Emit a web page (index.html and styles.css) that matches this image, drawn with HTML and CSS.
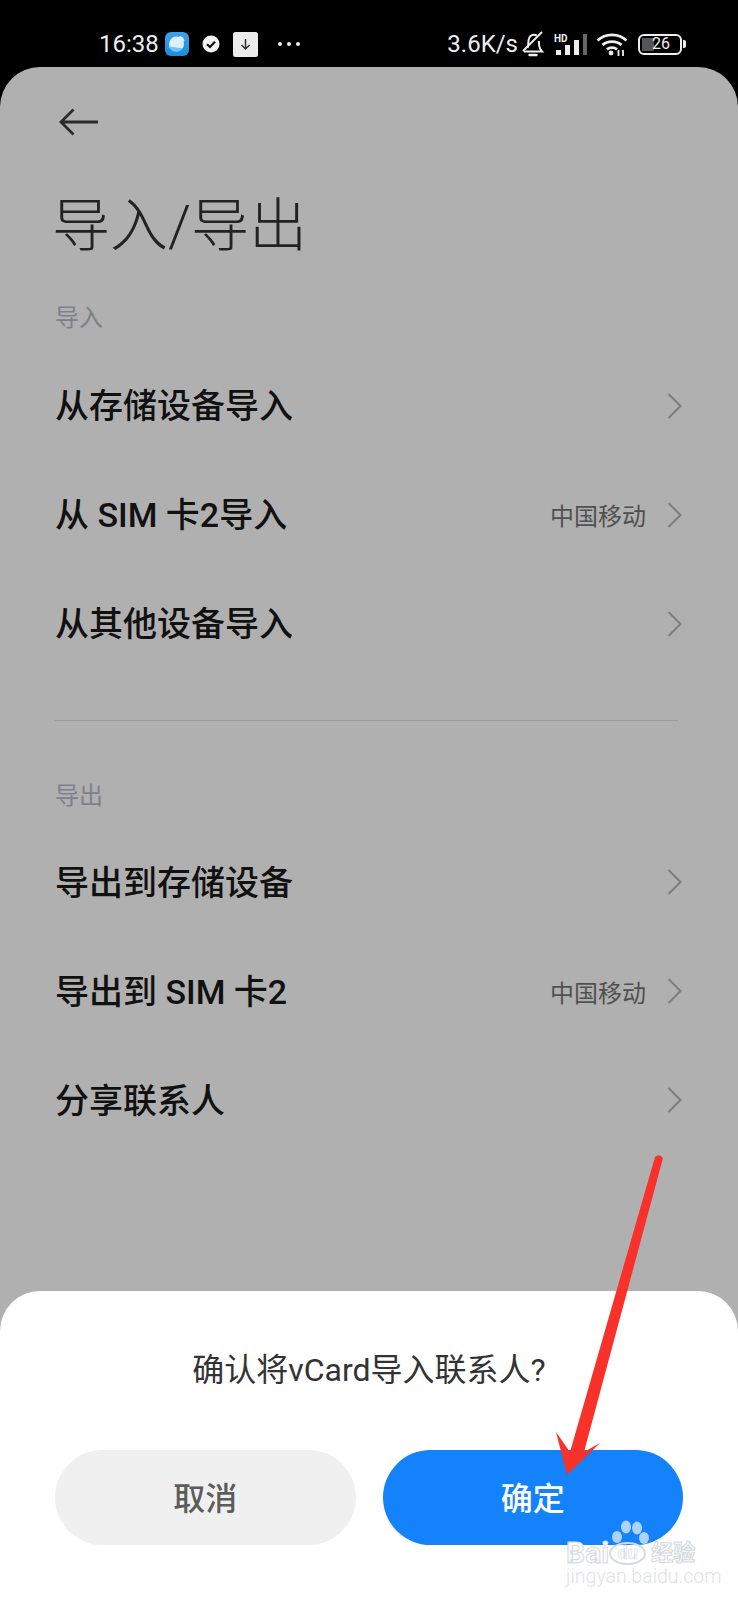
FILE: index.html
```html
<!DOCTYPE html>
<html lang="zh-CN">
<head>
    <meta charset="UTF-8">
    <meta name="viewport" content="width=device-width, initial-scale=1.0">
    <title>导入/导出</title>
    <link rel="stylesheet" href="styles.css">
</head>
<body>
    <div class="screen">
        <div class="status-bar">
            <div class="status-left">
                <span class="clock">16:38</span>
                <svg class="app-icon" width="24" height="24" viewBox="0 0 24 24">
                    <defs>
                        <linearGradient id="app-blue" x1="0" y1="0" x2="0" y2="1">
                            <stop offset="0" stop-color="#3f9fe8"></stop>
                            <stop offset="1" stop-color="#1a8fe0"></stop>
                        </linearGradient>
                    </defs>
                    <rect width="24" height="24" rx="6" fill="url(#app-blue)"></rect>
                    <path d="M4 15L15 4l3 1.500 1.500 3L9 19.500z" fill="#e6f2fb"></path>
                    <circle cx="11.500" cy="12" r="7.500" fill="#dceffb"></circle>
                    <path d="M4.500 14.500a7.500 7.500 0 0 0 13 2z" fill="#6fc4f2"></path>
                </svg>
                <svg class="check-icon" width="18" height="18" viewBox="0 0 18 18">
                    <circle cx="9" cy="9" r="8.500" fill="#f2f2f2"></circle>
                    <path d="M5 9.200l3 2.800 5-5.200" fill="none" stroke="#111" stroke-width="2.200"></path>
                </svg>
                <svg class="down-icon" width="25" height="25" viewBox="0 0 25 25">
                    <rect width="25" height="25" rx="2.500" fill="#ececec"></rect>
                    <path d="M12.500 7v10M8.500 13l4 4 4-4" fill="none" stroke="#333" stroke-width="1.500"></path>
                </svg>
                <svg class="more-icon" width="24" height="6" viewBox="0 0 24 6">
                    <circle cx="3" cy="3" r="2" fill="#eee"></circle>
                    <circle cx="12" cy="3" r="2" fill="#eee"></circle>
                    <circle cx="21" cy="3" r="2" fill="#eee"></circle>
                </svg>
            </div>
            <div class="status-right">
                <span class="speed">3.6K/s</span>
                <svg class="bell-icon" width="24" height="26" viewBox="0 0 24 26">
                    <path d="M3 20.500h18c-2-2-2.600-3.400-2.800-6l-.4-4.500M6.500 17c.4-1 .6-2.200.7-3.500l.3-4C8 6 10 3.800 13 3.800c1 0 2 .3 2.800.8" fill="none" stroke="#eee" stroke-width="2"></path>
                    <path d="M2 20L21 1" stroke="#eee" stroke-width="2"></path>
                    <path d="M8.500 24h7" stroke="#eee" stroke-width="2.400" stroke-linecap="round"></path>
                </svg>
                <div class="signal">
                    <span class="hd">HD</span>
                    <svg width="33" height="21" viewBox="0 0 33 21">
                        <rect x="2" y="16" width="5" height="5" fill="#eee"></rect>
                        <rect x="11" y="11" width="5" height="10" fill="#eee"></rect>
                        <rect x="20" y="6" width="5" height="15" fill="#eee"></rect>
                        <rect x="29" y="0" width="4" height="21" fill="#666"></rect>
                    </svg>
                </div>
                <svg class="wifi-icon" width="32" height="24" viewBox="0 0 32 24">
                    <path d="M1.500 8.500C9.500 1 22.500 1 30.500 8.500M6.500 13c5-4.500 14-4.500 19 0M11 17.300c2.800-2.300 7.200-2.300 10 0" fill="none" stroke="#eee" stroke-width="2.800"></path>
                    <circle cx="15" cy="21" r="2.400" fill="#eee"></circle>
                    <path d="M22.500 18v6M27 18v6" stroke="#eee" stroke-width="1.800"></path>
                </svg>
                <div class="battery">
                    <div class="battery-body">
                        <span class="battery-fill"></span>
                        <span class="battery-text">26</span>
                    </div>
                    <span class="battery-cap"></span>
                </div>
            </div>
        </div>

        <div class="sheet">
            <div class="nav">
                <svg width="40" height="28" viewBox="0 0 40 28">
                    <path d="M39 14H2M14.500 1.500L2 14l12.500 12.500" fill="none" stroke="#2b2b2b" stroke-width="2.800"></path>
                </svg>
            </div>
            <h1 class="title">导入/导出</h1>

            <div class="section-label first">导入</div>
            <div class="row">
                <span class="row-name">从存储设备导入</span>
                <svg class="chevron" width="15" height="26" viewBox="0 0 15 26"><polyline points="1.500 1 13.500 13 1.500 25"></polyline></svg>
            </div>
            <div class="row">
                <span class="row-name">从 SIM 卡2导入</span>
                <span class="row-value">中国移动</span>
                <svg class="chevron" width="15" height="26" viewBox="0 0 15 26"><polyline points="1.500 1 13.500 13 1.500 25"></polyline></svg>
            </div>
            <div class="row">
                <span class="row-name">从其他设备导入</span>
                <svg class="chevron" width="15" height="26" viewBox="0 0 15 26"><polyline points="1.500 1 13.500 13 1.500 25"></polyline></svg>
            </div>

            <div class="divider"></div>

            <div class="section-label">导出</div>
            <div class="row">
                <span class="row-name">导出到存储设备</span>
                <svg class="chevron" width="15" height="26" viewBox="0 0 15 26"><polyline points="1.500 1 13.500 13 1.500 25"></polyline></svg>
            </div>
            <div class="row">
                <span class="row-name">导出到 SIM 卡2</span>
                <span class="row-value">中国移动</span>
                <svg class="chevron" width="15" height="26" viewBox="0 0 15 26"><polyline points="1.500 1 13.500 13 1.500 25"></polyline></svg>
            </div>
            <div class="row">
                <span class="row-name">分享联系人</span>
                <svg class="chevron" width="15" height="26" viewBox="0 0 15 26"><polyline points="1.500 1 13.500 13 1.500 25"></polyline></svg>
            </div>
        </div>

        <div class="dialog">
            <p class="dialog-text">确认将vCard导入联系人?</p>
            <div class="dialog-buttons">
                <button class="btn btn-cancel">取消</button>
                <button class="btn btn-ok">确定</button>
            </div>
        </div>

        <!-- red annotation arrow drawn over the screenshot -->
        <svg class="arrow" width="738" height="1600" viewBox="0 0 738 1600">
            <path d="M655 1157Q659 1153 663 1158L584 1452 600 1443 567 1475 556 1432 570 1452z" fill="#f8312b"></path>
        </svg>

        <div class="watermark">
            <svg class="paw" width="42" height="30" viewBox="0 0 42 30">
                <ellipse cx="6" cy="17" rx="5" ry="6" fill="#fff"></ellipse>
                <ellipse cx="15" cy="7" rx="5" ry="6.500" fill="#fff"></ellipse>
                <ellipse cx="26" cy="8" rx="5" ry="6.500" fill="#fff"></ellipse>
                <ellipse cx="33" cy="18" rx="5" ry="6" fill="#fff"></ellipse>
            </svg>
            <div class="wm-brand"><span>Bai</span><span class="wm-du">du</span><span class="wm-cn">经验</span></div>
            <div class="wm-url">jingyan.baidu.com</div>
        </div>
    </div>
</body>
</html>
```

FILE: styles.css
```css
* {
    box-sizing: border-box;
}

body {
    margin: 0;
    background-color: #000;
    font-family: Roboto, "Noto Sans CJK SC", sans-serif;
}

.screen {
    position: relative;
    width: 738px;
    height: 1600px;
    overflow: hidden;
    display: flex;
    flex-direction: column;
}

/* Status bar */
.status-bar {
    height: 67px;
    flex: none;
    display: flex;
    align-items: center;
    justify-content: space-between;
    padding: 21px 52px 0 99px;
    color: #eee;
}

.status-left,
.status-right {
    display: flex;
    align-items: center;
}

.clock {
    font-size: 24px;
    width: 66px;
}

.check-icon {
    margin-left: 13px;
}

.down-icon {
    margin-left: 13px;
}

.more-icon {
    margin-left: 19px;
}

.speed {
    font-size: 24px;
}

.bell-icon {
    margin-left: 3px;
}

.signal {
    position: relative;
    width: 33px;
    height: 21px;
    margin-left: 9px;
}

.signal svg {
    display: block;
}

.hd {
    position: absolute;
    left: 0;
    top: -1px;
    font-size: 10px;
    font-weight: 700;
    line-height: 11px;
}

.wifi-icon {
    margin-left: 9px;
}

.battery {
    display: flex;
    align-items: center;
    margin-left: 10px;
}

.battery-body {
    position: relative;
    width: 44px;
    height: 21px;
    border: 2.500px solid #eee;
    border-radius: 6px;
}

.battery-fill {
    position: absolute;
    left: 2px;
    top: 2px;
    bottom: 2px;
    width: 12px;
    background-color: #555;
    border-radius: 1px;
}

.battery-text {
    position: absolute;
    left: 2px;
    right: 0;
    top: 0;
    text-align: center;
    font-size: 16px;
    line-height: 16px;
}

.battery-cap {
    width: 3px;
    height: 8px;
    margin-left: 1px;
    background-color: #eee;
    border-radius: 0 2px 2px 0;
}

/* Main sheet, dimmed by the dialog */
.sheet {
    flex: 1;
    background-color: #b0b0b0;
    border-radius: 40px 40px 0 0;
    padding: 0 56px 0 55px;
}

.nav {
    height: 119px;
    padding-top: 41px;
    margin-left: 4px;
}

.nav svg {
    display: block;
}

.title {
    margin: 0 0 0 -3px;
    font-size: 58px;
    font-weight: 300;
    line-height: 80px;
    color: #222;
}

.section-label {
    height: 40px;
    margin-top: 55px;
    margin-bottom: 12px;
    font-size: 24px;
    line-height: 40px;
    color: #80808a;
}

.section-label.first {
    margin-top: 32px;
    margin-bottom: 13px;
}

.row {
    height: 109px;
    display: flex;
    align-items: center;
    color: #111;
}

.row-name {
    flex: 1;
    padding-bottom: 4px;
    font-size: 34px;
    font-weight: 500;
}

.row-value {
    margin-right: 21px;
    font-size: 24px;
    color: #505050;
}

.chevron {
    display: block;
    fill: none;
    stroke: #7d7d7d;
    stroke-width: 2;
}

.divider {
    height: 1px;
    margin-top: 41.500px;
    margin-right: 4px;
    background-color: #9c9c9c;
}

/* Bottom dialog */
.dialog {
    position: absolute;
    left: 0;
    right: 0;
    bottom: 0;
    height: 309px;
    padding: 0 55px;
    background-color: #fff;
    border-radius: 40px 40px 0 0;
}

.dialog-text {
    margin: 0;
    padding-top: 56px;
    height: 159px;
    font-size: 32px;
    line-height: 46px;
    text-align: center;
    color: #333;
}

.dialog-buttons {
    display: flex;
    gap: 27px;
}

.btn {
    flex: 1;
    height: 95px;
    padding: 0 0 3px;
    border: none;
    border-radius: 48px;
    font-family: inherit;
    font-size: 32px;
    font-weight: 500;
}

.btn-cancel {
    background-color: #f0f0f0;
    color: #5c5c5c;
}

.btn-ok {
    background-color: #1482fa;
    color: #fff;
}

/* Overlays */
.arrow {
    position: absolute;
    left: 0;
    top: 0;
}

.watermark {
    position: absolute;
    left: 566px;
    top: 1520px;
    width: 134px;
    height: 72px;
}

.paw {
    position: absolute;
    left: 45px;
    top: 0;
    opacity: 0.65;
}

.wm-brand {
    position: absolute;
    left: 0;
    top: 19px;
    display: flex;
    align-items: center;
    font-size: 30px;
    font-weight: 700;
    line-height: 28px;
    color: #fafbfd;
    -webkit-text-stroke: 1px #d5d9e0;
}

.wm-du {
    width: 37px;
    height: 23px;
    border: 2px solid #d5d9e0;
    border-radius: 50%;
    font-size: 18px;
    line-height: 17px;
    text-align: center;
    -webkit-text-stroke: 0.500px #d5d9e0;
}

.wm-cn {
    margin-left: 5px;
    font-size: 22px;
}

.wm-url {
    position: absolute;
    left: 0;
    top: 48px;
    font-size: 19.500px;
    font-weight: 300;
    line-height: 18px;
    color: #dfe2e8;
}
```
